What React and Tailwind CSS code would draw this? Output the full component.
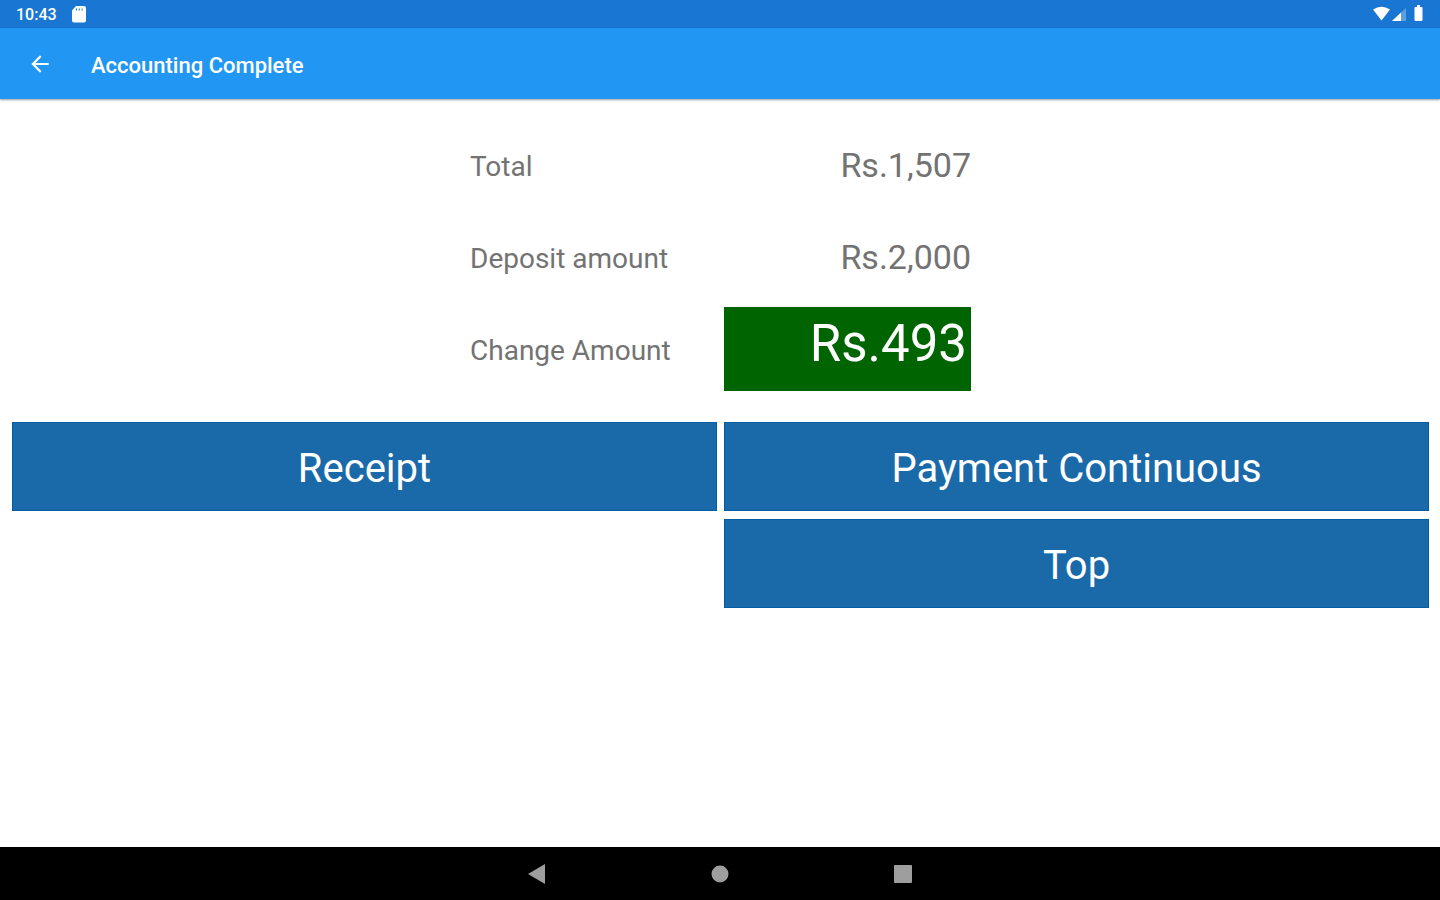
import { MdArrowBack } from "react-icons/md";

const rows = [
  { label: "Total", value: "Rs.1,507" },
  { label: "Deposit amount", value: "Rs.2,000" },
];

function StatusBar() {
  return (
    <div className="flex h-7 items-center justify-between bg-[#1976d2] px-4 text-white">
      <div className="flex items-center gap-3">
        <span className="pt-px text-base font-medium">10:43</span>
        <svg width="18" height="18" viewBox="0 0 18 18" fill="currentColor" aria-hidden="true">
          <path
            fillRule="evenodd"
            d="M7 1h8a2 2 0 0 1 2 2v12.500a2 2 0 0 1-2 2h-10a2 2 0 0 1-2-2V5.500zM7 3.500v2h1V3.500zM9.800 3.500v2h1V3.500zM12.600 3.500v2h1V3.500z"
          />
        </svg>
      </div>
      <svg width="52" height="18" viewBox="0 0 52 18" fill="currentColor" aria-hidden="true">
        {/* wifi */}
        <path d="M1 4.500Q9.500-1 18 4.500L9.500 15.500z" />
        {/* signal */}
        <path d="M34 3v13H20z" opacity="0.3" />
        <path d="M29 7.500v8.500H20z" />
        {/* battery */}
        <path d="M45 0h3v2h1.500a1 1 0 0 1 1 1v12a1 1 0 0 1-1 1h-6a1 1 0 0 1-1-1V3a1 1 0 0 1 1-1H45z" />
      </svg>
    </div>
  );
}

function ActionButton({ children, className = "" }) {
  return (
    <button
      type="button"
      className={`h-[89px] border border-[#045ca4] bg-[#1a69a9] pt-1 text-[40px] text-white ${className}`}
    >
      {children}
    </button>
  );
}

export default function App() {
  return (
    <div className="flex min-h-screen flex-col bg-white font-['Roboto',sans-serif]">
      <StatusBar />

      {/* App bar */}
      <header className="flex h-[71px] items-center gap-[38px] bg-[#2196f3] px-[27px] text-white shadow-[0_1px_2px_rgba(0,0,0,0.4)]">
        <button type="button" aria-label="Back">
          <MdArrowBack size={26} />
        </button>
        <h1 className="pt-1 text-[22px] font-medium">Accounting Complete</h1>
      </header>

      <main className="flex-grow pt-6 pr-[11px] pl-3">
        {/* Amounts */}
        <dl className="mx-auto flex w-full max-w-[501px] flex-col gap-2 text-[#737373]">
          {rows.map((row) => (
            <div key={row.label} className="flex h-[84px] items-center justify-between">
              <dt className="pt-1 text-[28px]">{row.label}</dt>
              <dd className="text-[34px]">{row.value}</dd>
            </div>
          ))}
          <div className="flex h-[84px] items-center justify-between">
            <dt className="pt-1 text-[28px]">Change Amount</dt>
            <dd className="h-full w-[247px] bg-[#006400] px-1 text-right text-[51px] leading-[74px] text-white">
              Rs.493
            </dd>
          </div>
        </dl>

        {/* Actions */}
        <div className="mt-[31px] grid grid-cols-2 gap-x-[7px] gap-y-2">
          <ActionButton>Receipt</ActionButton>
          <ActionButton>Payment Continuous</ActionButton>
          <ActionButton className="col-start-2">Top</ActionButton>
        </div>
      </main>

      {/* System navigation */}
      <nav className="flex h-[53px] items-center justify-center gap-[163px] bg-black text-[#9e9e9e]">
        <button type="button" aria-label="Back">
          <svg width="20" height="20" viewBox="0 0 20 20" fill="currentColor">
            <path d="M18 0v20L1 10z" />
          </svg>
        </button>
        <button type="button" aria-label="Home">
          <svg width="20" height="20" viewBox="0 0 20 20" fill="currentColor">
            <circle cx="10" cy="10" r="8.500" />
          </svg>
        </button>
        <button type="button" aria-label="Recent apps">
          <svg width="20" height="20" viewBox="0 0 20 20" fill="currentColor">
            <rect x="1" y="1" width="18" height="18" rx="1" />
          </svg>
        </button>
      </nav>
    </div>
  );
}
